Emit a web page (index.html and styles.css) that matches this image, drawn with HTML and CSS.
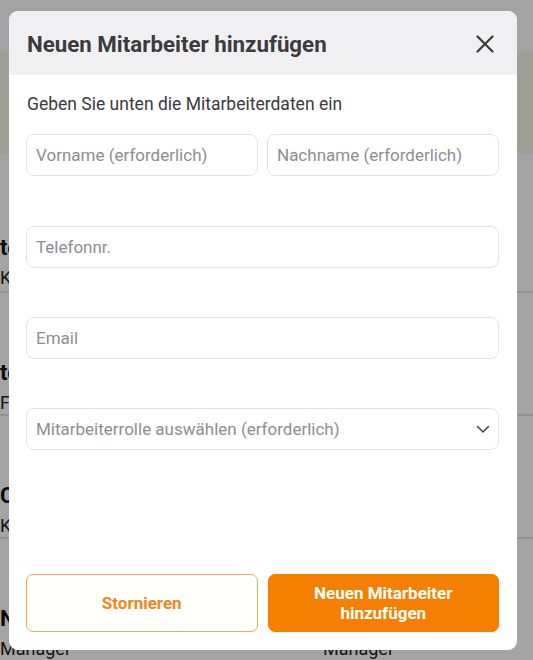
FILE: index.html
```html
<!DOCTYPE html>
<html lang="de">
<head>
<meta charset="utf-8">
<title>Neuen Mitarbeiter hinzufügen</title>
<link rel="stylesheet" href="styles.css">
</head>
<body>
<div class="page">
  <div class="page-top"></div>
  <div class="page-banner"></div>
  <div class="list">
    <div class="row"><div class="cell"><div class="name">tom</div><div class="role">Koch</div></div><div class="cell"></div></div>
    <div class="row"><div class="cell"><div class="name">tom</div><div class="role">Fahrer</div></div><div class="cell"></div></div>
    <div class="row"><div class="cell"><div class="name">Carl</div><div class="role">Koch</div></div><div class="cell"></div></div>
    <div class="row"><div class="cell"><div class="name">Nina</div><div class="role">Manager</div></div><div class="cell"><div class="name">&nbsp;</div><div class="role">Manager</div></div></div>
  </div>
</div>
<div class="overlay"></div>

<div class="modal">
  <div class="modal-header">
    <h1 class="modal-title">Neuen Mitarbeiter hinzufügen</h1>
    <svg class="close" width="18" height="18" viewBox="0 0 18 18"><path d="M1.5 1.5 L16.5 16.5 M16.5 1.5 L1.5 16.5" stroke="#3b3b3d" stroke-width="2.2" stroke-linecap="round" fill="none"/></svg>
  </div>
  <div class="modal-body">
    <p class="intro">Geben Sie unten die Mitarbeiterdaten ein</p>
    <div class="name-row">
      <input class="field" placeholder="Vorname (erforderlich)">
      <input class="field" placeholder="Nachname (erforderlich)">
    </div>
    <input class="field wide" placeholder="Telefonnr.">
    <input class="field wide" placeholder="Email">
    <div class="field wide select">
      <span>Mitarbeiterrolle auswählen (erforderlich)</span>
      <svg width="14" height="9" viewBox="0 0 14 9"><path d="M1.5 1.5 L7 7 L12.5 1.5" stroke="#4a4a4c" stroke-width="1.6" fill="none" stroke-linecap="round" stroke-linejoin="round"/></svg>
    </div>
    <div class="spacer"></div>
    <div class="actions">
      <button class="btn btn-outline">Stornieren</button>
      <button class="btn btn-primary"><span class="btn-line">Neuen Mitarbeiter</span><span class="btn-line">hinzufügen</span></button>
    </div>
  </div>
</div>
</body>
</html>
```
FILE: styles.css
```css
* { box-sizing: border-box; }
html, body { margin: 0; padding: 0; }
body {
  width: 533px;
  height: 660px;
  overflow: hidden;
  position: relative;
  font-family: Roboto, "Noto Sans", sans-serif;
  background: #ffffff;
}
.page { width: 533px; height: 660px; display: flex; flex-direction: column; }
.page-top { height: 62px; background: #fdfdff; }
.page-banner { height: 122px; background: #f6f7e8; }
.list { display: flex; flex-direction: column; padding-top: 14px; }
.row {
  display: grid;
  grid-template-columns: 318px 1fr;
  height: 123px;
  border-top: 2px solid #e4e4e6;
}
.list .row:first-child { border-top: none; }
.cell { padding: 67px 0 0 0; }
.cell + .cell { padding-left: 5px; }
.name { font-size: 22px; font-weight: 700; color: #111; line-height: 26px; }
.role { font-size: 18px; color: #222; line-height: 22px; margin-top: 6px; }
.overlay {
  position: absolute;
  inset: 0;
  background: rgba(0, 0, 0, 0.355);
}
.modal {
  position: absolute;
  left: 9px;
  top: 11px;
  width: 508px;
  height: 639px;
  background: #ffffff;
  border-radius: 9px;
  overflow: hidden;
  display: flex;
  flex-direction: column;
}
.modal-header {
  height: 64px;
  background: #f0f0f2;
  display: flex;
  align-items: center;
  justify-content: space-between;
  padding: 0 23px 0 18px;
  flex-shrink: 0;
}
.modal-title {
  margin: 0;
  font-size: 22.3px;
  font-weight: 700;
  color: #3b3b3d;
  letter-spacing: 0;
  padding-top: 2px;
}
.close { display: block; margin-top: 2px; }
.modal-body {
  flex: 1;
  display: flex;
  flex-direction: column;
  padding: 19px 18px 18px 17px;
}
.intro {
  margin: 0 0 19px 1px;
  font-size: 17.5px;
  line-height: 21px;
  color: #3a3a3c;
}
.name-row {
  display: grid;
  grid-template-columns: 1fr 1fr;
  gap: 9px;
  margin-bottom: 50px;
}
.field {
  height: 42px;
  border: 1px solid #e3e3e7;
  border-radius: 8px;
  background: #fff;
  font-family: Roboto, "Noto Sans", sans-serif;
  font-size: 17px;
  color: #333;
  padding: 0 9px;
  outline: none;
  width: 100%;
}
.field::placeholder { color: #8d8d92; }
.wide { margin-bottom: 49px; }
.select {
  display: flex;
  align-items: center;
  justify-content: space-between;
  color: #8d8d92;
  padding-right: 8px;
  margin-bottom: 0;
}
.spacer { flex: 1; }
.actions {
  display: grid;
  grid-template-columns: 1fr 1fr;
  gap: 10px;
}
.btn {
  height: 58px;
  border-radius: 7px;
  font-family: Roboto, "Noto Sans", sans-serif;
  font-size: 17px;
  font-weight: 700;
  line-height: 20px;
  cursor: pointer;
  display: flex;
  flex-direction: column;
  align-items: center;
  justify-content: center;
}
.btn-line { display: block; }
.btn-outline {
  background: #fffffb;
  border: 1px solid #f6a557;
  color: #f2861a;
}
.btn-primary {
  background: #f47f00;
  border: 1px solid #f47f00;
  color: #ffffff;
  padding-top: 1px;
}
```
